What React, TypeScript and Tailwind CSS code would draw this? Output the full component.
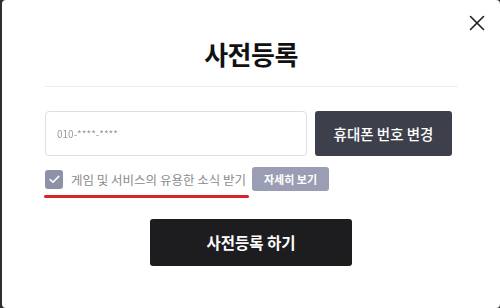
import { X } from "lucide-react";

const FONT = "font-['Noto_Sans_CJK_KR','Noto_Sans',sans-serif]";

function CheckBox() {
  return (
    <span className="flex h-[19px] w-[18px] shrink-0 items-center justify-center rounded-[3px] bg-[#8e92a8]">
      <svg width="11" height="9" viewBox="0 0 11 9" fill="none">
        <path d="M1.2 4.6 4 7.3 9.8 1.4" stroke="#fff" strokeWidth="1.5" strokeLinecap="round" strokeLinejoin="round" />
      </svg>
    </span>
  );
}

export default function App() {
  return (
    <div className={`h-[308px] w-[500px] overflow-hidden bg-[#2e2e2e] pl-[2px] ${FONT}`}>
      <div className="relative flex h-full flex-col rounded-[4px] bg-white px-[42px]">
        <button className="absolute right-[10px] top-[10px] text-[#222]" aria-label="close">
          <X size={26} strokeWidth={1.5} />
        </button>

        {/* title */}
        <div className="flex h-[87px] items-start justify-center border-b border-[#efefef] pt-[38px]">
          <h2 className="text-[26px] font-bold leading-[32px] tracking-[-0.5px] text-[#111]">사전등록</h2>
        </div>

        {/* phone row */}
        <div className="mt-[24px] flex h-[45px] gap-[8px] pl-[1px]">
          <div className="flex w-[262px] items-center rounded-[4px] border border-[#dedede] pl-[11px]">
            <span className="text-[10px] text-[#999] blur-[0.5px]">010-****-****</span>
          </div>
          <button className="flex w-[137px] items-center justify-center rounded-[3px] bg-[#3d404b] text-[14.5px] font-medium text-white">
            휴대폰 번호 변경
          </button>
        </div>

        {/* agree row */}
        <div className="mt-[11px] flex items-center pl-[1px]">
          <CheckBox />
          <span className="ml-[8px] text-[12.5px] leading-[19px] text-[#8a8a8a]">게임 및 서비스의 유용한 소식 받기</span>
          <button className="ml-[6px] flex h-[24px] w-[77px] items-center justify-center rounded-[3px] bg-[#9a9db3] text-[11px] font-bold text-white">
            자세히 보기
          </button>
        </div>
        <div className="mt-[4px] h-[3px] w-[205px] rounded-full bg-[#d7252c]" />

        {/* submit */}
        <button className="mt-[21px] flex h-[47px] w-[202px] items-center justify-center self-center rounded-[3px] bg-[#1d1d1f] text-[15.5px] font-bold text-white">
          사전등록 하기
        </button>
      </div>
    </div>
  );
}
